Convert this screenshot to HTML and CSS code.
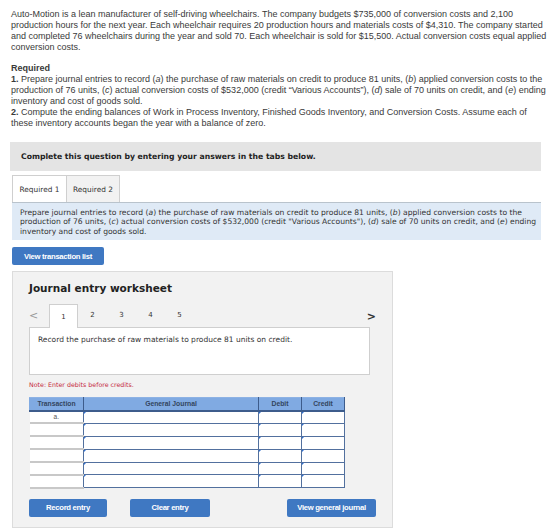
FILE: index.html
```html
<!DOCTYPE html>
<html lang="en">
<head>
<meta charset="utf-8">
<title>Auto-Motion — Journal entries</title>
<link rel="stylesheet" href="styles.css">
</head>
<body>
<div class="page">
  <section class="problem">
    <p class="intro">Auto-Motion is a lean manufacturer of self-driving wheelchairs. The company budgets $735,000 of conversion costs and 2,100 production hours for the next year. Each wheelchair requires 20 production hours and materials costs of $4,310. The company started and completed 76 wheelchairs during the year and sold 70. Each wheelchair is sold for $15,500. Actual conversion costs equal applied conversion costs.</p>
    <p class="req-title">Required</p>
    <p class="req"><b>1.</b> Prepare journal entries to record (<i>a</i>) the purchase of raw materials on credit to produce 81 units, (<i>b</i>) applied conversion costs to the production of 76 units, (<i>c</i>) actual conversion costs of $532,000 (credit “Various Accounts”), (<i>d</i>) sale of 70 units on credit, and (<i>e</i>) ending inventory and cost of goods sold.<br><b>2.</b> Compute the ending balances of Work in Process Inventory, Finished Goods Inventory, and Conversion Costs. Assume each of these inventory accounts began the year with a balance of zero.</p>
  </section>

  <div class="banner">Complete this question by entering your answers in the tabs below.</div>

  <div class="tabs">
    <div class="tab active">Required 1</div>
    <div class="tab">Required 2</div>
  </div>
  <div class="instructions">Prepare journal entries to record (<i>a</i>) the purchase of raw materials on credit to produce 81 units, (<i>b</i>) applied conversion costs to the production of 76 units, (<i>c</i>) actual conversion costs of $532,000 (credit "Various Accounts"), (<i>d</i>) sale of 70 units on credit, and (<i>e</i>) ending inventory and cost of goods sold.</div>

  <button class="btn btn-list">View transaction list</button>

  <div class="worksheet">
    <h2 class="ws-title">Journal entry worksheet</h2>
    <div class="pager">
      <span class="arrow prev">&lt;</span>
      <span class="page-tab current">1</span>
      <span class="page-tab">2</span>
      <span class="page-tab">3</span>
      <span class="page-tab">4</span>
      <span class="page-tab">5</span>
      <span class="arrow next">&gt;</span>
    </div>
    <div class="entry-desc">Record the purchase of raw materials to produce 81 units on credit.</div>
    <p class="note">Note: Enter debits before credits.</p>

    <table class="journal">
      <thead>
        <tr><th class="c-tr">Transaction</th><th class="c-gj">General Journal</th><th class="c-amt">Debit</th><th class="c-amt">Credit</th></tr>
      </thead>
      <tbody>
        <tr><td class="tr">a.</td><td class="in"></td><td class="in"></td><td class="in"></td></tr>
        <tr><td class="tr"></td><td class="in"></td><td class="in"></td><td class="in"></td></tr>
        <tr><td class="tr"></td><td class="in"></td><td class="in"></td><td class="in"></td></tr>
        <tr><td class="tr"></td><td class="in"></td><td class="in"></td><td class="in"></td></tr>
        <tr><td class="tr"></td><td class="in"></td><td class="in"></td><td class="in"></td></tr>
        <tr><td class="tr"></td><td class="in"></td><td class="in"></td><td class="in"></td></tr>
      </tbody>
    </table>

    <div class="actions">
      <button class="btn btn-record">Record entry</button>
      <button class="btn btn-clear">Clear entry</button>
      <button class="btn btn-view">View general journal</button>
    </div>
  </div>
</div>
</body>
</html>
```

FILE: styles.css
```css
* { box-sizing: border-box; }

body {
  margin: 0;
  background: #fff;
  color: #333;
}

.page {
  padding: 9px 0 0 11px;
  width: 552px;
}

/* problem statement */
.problem {
  width: 538px;
  font-family: "Liberation Sans", Arial, sans-serif;
  font-size: 9px;
  line-height: 11px;
  color: #3a3a3a;
}
.problem p { margin: 0; }
.intro { margin-bottom: 10px !important; }
.req-title { font-weight: bold; }
.req b { font-weight: bold; }

/* grey banner */
.banner {
  margin: 13px 0 0 -1px;
  width: 531px;
  height: 29px;
  background: #e4e4e4;
  padding-left: 11px;
  display: flex;
  align-items: center;
  font-family: "DejaVu Sans", Verdana, sans-serif;
  font-size: 7.7px;
  font-weight: bold;
  color: #222;
}

/* requirement tabs */
.tabs {
  display: flex;
  margin: 4px 0 0 1px;
}
.tab {
  height: 27px;
  width: 55px;
  display: flex;
  align-items: center;
  justify-content: center;
  font-family: "DejaVu Sans", Verdana, sans-serif;
  font-size: 7.4px;
  color: #333;
  border: 1px solid #cfcfcf;
  border-bottom: none;
  background: #fff;
}
.tab + .tab {
  width: 53px;
  background: #f2f2f2;
  border-left: none;
}

.instructions {
  margin-left: 1px;
  width: 529px;
  height: 38px;
  background: #dfeaf6;
  border-top: 1px solid #b9c3cc;
  padding: 5px 3px 0 8px;
  font-family: "DejaVu Sans", Verdana, sans-serif;
  font-size: 7.6px;
  line-height: 9.3px;
  color: #333;
}

/* buttons */
.btn {
  display: flex;
  align-items: center;
  justify-content: center;
  border: none;
  border-radius: 2px;
  background: #3f78c2;
  color: #fff;
  font-family: "Liberation Sans", Arial, sans-serif;
  font-weight: bold;
  font-size: 7.7px;
  letter-spacing: -0.3px;
  padding: 0;
  height: 18px;
}
.btn-list {
  margin: 7px 0 0 1px;
  width: 92px;
}

/* worksheet panel */
.worksheet {
  margin: 6px 0 0 1px;
  width: 381px;
  height: 257px;
  background: #f2f2f2;
  border: 1px solid #dcdcdc;
  padding: 0 0 0 16px;
}
.ws-title {
  margin: 9px 0 0 0;
  font-family: "DejaVu Sans", Verdana, sans-serif;
  font-size: 10.5px;
  line-height: 14px;
  font-weight: bold;
  color: #222;
}

.pager {
  display: flex;
  align-items: flex-end;
  height: 24px;
  margin-top: 8px;
  font-family: "DejaVu Sans", Verdana, sans-serif;
  font-size: 7px;
  color: #333;
  width: 347px;
}
.arrow {
  font-size: 11px;
  color: #999;
  height: 20px;
  align-self: center;
  display: flex;
  align-items: center;
}
.prev { width: 20px; }
.next { margin-left: auto; color: #333; font-weight: bold; padding-top: 2px; }
.page-tab {
  width: 29px;
  height: 24px;
  display: flex;
  align-items: center;
  justify-content: center;
}
.page-tab.current {
  background: #fff;
  border: 1px solid #cfcfcf;
  border-bottom: none;
  position: relative;
  top: 1px;
  height: 24px;
}

.entry-desc {
  width: 341px;
  height: 48px;
  background: #fff;
  border: 1px solid #cfcfcf;
  padding: 7px 0 0 8px;
  font-family: "DejaVu Sans", Verdana, sans-serif;
  font-size: 7.5px;
  color: #333;
}

.note {
  margin: 6px 0 0 0;
  font-family: "DejaVu Sans", Verdana, sans-serif;
  font-size: 6.3px;
  color: #c5283d;
  line-height: 8px;
}

/* general journal grid */
.journal {
  margin-top: 8px;
  border-collapse: collapse;
  width: 315px;
  table-layout: fixed;
  font-family: "Liberation Sans", Arial, sans-serif;
}
.journal th {
  height: 13px;
  padding: 0;
  background: #80aae2;
  color: #33455e;
  font-size: 6.8px;
  font-weight: bold;
  border: 1px solid #3d5c8c;
  border-top: 1px solid #8db2e4;
  border-bottom: 2px solid #3d5c8c;
}
.journal th.c-tr { width: 54px; border-left: 1px solid #80aae2; }
.journal th.c-gj { width: 175px; }
.journal th.c-amt { width: 43px; }

.journal td {
  height: 12.9px;
  padding: 0;
  background: #fff;
}
.journal td.tr {
  text-align: center;
  font-size: 6.5px;
  color: #555;
  border-bottom: 2px solid #c8c8c8;
}
.journal td.in {
  border: 1.5px solid #52709e;
  position: relative;
}
.journal td.in::before {
  content: "";
  position: absolute;
  left: 0;
  top: 0;
  border-top: 2px solid #2f6fd0;
  border-right: 2px solid transparent;
}

.actions {
  display: flex;
  margin-top: 10px;
  width: 347px;
}
.btn-record { width: 78px; }
.btn-clear { width: 80px; margin-left: 23px; }
.btn-view { width: 89px; margin-left: auto; }
```
